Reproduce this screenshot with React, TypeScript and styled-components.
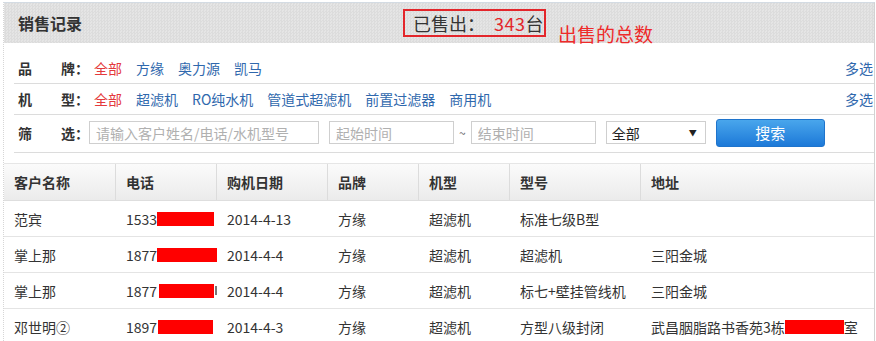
import React from 'react';
import styled, { createGlobalStyle } from 'styled-components';

const GlobalStyle = createGlobalStyle`
  html, body {
    margin: 0;
    padding: 0;
    background: #fff;
  }

  body {
    font-family: 'Noto Sans CJK SC', 'Liberation Sans', sans-serif;
    font-size: 14px;
    color: #333;
  }
`;

interface Sale {
  name: string;
  phone: string;
  redact: number;
  redactShift?: number;
  date: string;
  brand: string;
  type: string;
  model: string;
  address?: string;
  addressTail?: string;
  tailMark?: boolean;
}

const brands = ['全部', '方缘', '奥力源', '凯马'];
const types = ['全部', '超滤机', 'RO纯水机', '管道式超滤机', '前置过滤器', '商用机'];
const columns = ['客户名称', '电话', '购机日期', '品牌', '机型', '型号', '地址'];

const sales: Sale[] = [
  { name: '范宾', phone: '1533', redact: 57, date: '2014-4-13', brand: '方缘', type: '超滤机', model: '标准七级B型' },
  { name: '掌上那', phone: '1877', redact: 61, date: '2014-4-4', brand: '方缘', type: '超滤机', model: '超滤机', address: '三阳金城' },
  { name: '掌上那', phone: '1877', redact: 56, redactShift: 2, tailMark: true, date: '2014-4-4', brand: '方缘', type: '超滤机', model: '标七+壁挂管线机', address: '三阳金城' },
  { name: '邓世明②', phone: '1897', redact: 55, redactShift: 1, date: '2014-4-3', brand: '方缘', type: '超滤机', model: '方型八级封闭', address: '武昌胭脂路书香苑3栋', addressTail: '室' },
];

const App = () => {
  return (
    <>
      <GlobalStyle />
      <Panel>
        <Header>
          <Title>销售记录</Title>
          <CountBox>
            已售出：<CountNum>343</CountNum>台
          </CountBox>
          <Note>出售的总数</Note>
        </Header>

        <Filters>
          <FilterRow>
            <Label>
              <span>品</span>
              <span>牌：</span>
            </Label>
            <Options>
              {brands.map((b, i) => (
                <Option key={b} active={i === 0}>
                  {b}
                </Option>
              ))}
            </Options>
            <More>多选</More>
          </FilterRow>
          <FilterRow>
            <Label>
              <span>机</span>
              <span>型：</span>
            </Label>
            <Options>
              {types.map((t, i) => (
                <Option key={t} active={i === 0}>
                  {t}
                </Option>
              ))}
            </Options>
            <More>多选</More>
          </FilterRow>
          <FilterRow tall>
            <Label>
              <span>筛</span>
              <span>选：</span>
            </Label>
            <Controls>
              <TextInput width={230} placeholder='请输入客户姓名/电话/水机型号' />
              <DateRange>
                <TextInput width={125} placeholder='起始时间' />
                <Tilde>~</Tilde>
                <TextInput width={125} placeholder='结束时间' />
              </DateRange>
              <SelectBox>
                <NativeSelect defaultValue='all'>
                  <option value='all'>全部</option>
                </NativeSelect>
                <Arrow>▼</Arrow>
              </SelectBox>
              <SearchButton>搜索</SearchButton>
            </Controls>
          </FilterRow>
        </Filters>

        <Table>
          <HeadRow>
            {columns.map((c) => (
              <HeadCell key={c}>{c}</HeadCell>
            ))}
          </HeadRow>
          {sales.map((s, i) => (
            <BodyRow key={i}>
              <Cell>{s.name}</Cell>
              <Cell>
                {s.phone}
                <Redact style={{ width: s.redact, marginLeft: s.redactShift || 0 }} />
                {s.tailMark && <TailMark />}
              </Cell>
              <Cell>{s.date}</Cell>
              <Cell>{s.brand}</Cell>
              <Cell>{s.type}</Cell>
              <Cell>{s.model}</Cell>
              <Cell>
                {s.address}
                {s.addressTail && (
                  <>
                    <Redact style={{ width: 59 }} />
                    {s.addressTail}
                  </>
                )}
              </Cell>
            </BodyRow>
          ))}
        </Table>
      </Panel>
    </>
  );
};

export default App;

const Panel = styled.div`
  box-sizing: border-box;
  width: 872px;
  margin: 2px 0 0 3px;
  border-top: 1px solid #d3dbe3;
  border-left: 1px dotted #d6d6d6;
  border-right: 1px solid #d2d2d2;
  background: #fff;
`;

const Header = styled.div`
  position: relative;
  display: flex;
  align-items: center;

  height: 40px;
  padding-left: 14px;

  background-color: #e5e5e5;
  background-image: repeating-conic-gradient(#dcdcdc 0 25%, transparent 0 50%);
  background-size: 3px 3px;
`;

const Title = styled.div`
  font-size: 16px;
  font-weight: bold;
  line-height: 20px;
  color: #333;
`;

const CountBox = styled.div`
  box-sizing: border-box;
  display: flex;
  align-items: center;

  width: 143px;
  height: 28px;
  margin-left: 321px;
  padding: 0 0 0 8px;

  border: 2px solid #e3262b;
  font-size: 18px;
  line-height: 20px;
  color: #333;
  white-space: nowrap;
`;

const CountNum = styled.span`
  margin-left: 9px;
  color: #e3262b;
  letter-spacing: 0.5px;
`;

const Note = styled.div`
  position: absolute;
  left: 554px;
  top: 21px;

  font-size: 19px;
  line-height: 20px;
  color: #ee2a2a;
  white-space: nowrap;
`;

const Filters = styled.div`
  padding: 10px 0 0 10px;
`;

const FilterRow = styled.div<{ tall?: boolean }>`
  display: flex;
  align-items: center;

  height: ${(props) => (props.tall ? '35px' : '30px')};
  padding: ${(props) => (props.tall ? '0 0 2px 4px' : '0 0 0 4px')};
  box-sizing: content-box;

  border-bottom: 1px solid #dcdcdc;
`;

const Label = styled.div`
  display: flex;
  justify-content: space-between;

  width: 71px;

  font-weight: bold;
  font-size: 14px;
  color: #333;
`;

const Options = styled.div`
  display: flex;
  gap: 14px;

  margin-left: 5px;
  flex-grow: 1;
`;

const Option = styled.a<{ active?: boolean }>`
  color: ${(props) => (props.active ? '#e4393c' : '#2f68ad')};
  cursor: pointer;
  white-space: nowrap;
`;

const More = styled.a`
  margin-right: 1px;
  color: #2f68ad;
  cursor: pointer;
`;

const Controls = styled.div`
  display: flex;
  align-items: center;
  gap: 10px;
`;

const TextInput = styled.input<{ width: number }>`
  box-sizing: border-box;
  width: ${(props) => props.width}px;
  height: 23px;
  padding: 0 6px;

  border: 1px solid #cfcfcf;
  outline: none;
  font-family: inherit;
  font-size: 14px;
  color: #333;

  &::placeholder {
    color: #b0b0b0;
  }
`;

const DateRange = styled.div`
  display: flex;
  align-items: center;
  gap: 5px;
`;

const Tilde = styled.span`
  color: #666;
  font-size: 12px;
`;

const SelectBox = styled.div`
  box-sizing: border-box;
  display: flex;
  align-items: center;

  width: 100px;
  height: 23px;
  padding: 0 8px 0 5px;

  border: 1px solid #cfcfcf;
  background: #fff;
`;

const NativeSelect = styled.select`
  flex-grow: 1;
  appearance: none;

  padding: 0;
  border: 0;
  outline: none;
  background: transparent;
  font-family: inherit;
  font-size: 14px;
  color: #222;
`;

const Arrow = styled.span`
  font-size: 8px;
  color: #222;
`;

const SearchButton = styled.button`
  box-sizing: border-box;
  width: 109px;
  height: 28px;

  border: 1px solid #1f74cc;
  border-radius: 3px;
  background: linear-gradient(#49a6ec, #1d79d8);
  font-family: inherit;
  font-size: 15px;
  color: #fff;
  cursor: pointer;
`;

const Table = styled.div`
  margin-top: 10px;
`;

const gridColumns = '112px 101px 111px 91px 91px 131px 1fr';

const HeadRow = styled.div`
  display: grid;
  grid-template-columns: ${gridColumns};

  height: 36px;

  border-top: 1px solid #e6e6e6;
  border-bottom: 1px solid #dedede;
  background: linear-gradient(#fbfbfb, #ebebeb);
`;

const HeadCell = styled.div`
  display: flex;
  align-items: center;

  padding-left: 10px;

  border-right: 1px solid #dcdcdc;
  font-weight: bold;
  font-size: 14px;
  color: #333;

  &:last-child {
    border-right: 0;
  }
`;

const BodyRow = styled.div`
  display: grid;
  grid-template-columns: ${gridColumns};

  height: 35px;

  border-bottom: 1px solid #e4e4e4;
`;

const Cell = styled.div`
  display: flex;
  align-items: center;

  padding-left: 10px;

  font-size: 14px;
  color: #333;
  white-space: nowrap;
`;

const Redact = styled.span`
  display: inline-block;
  height: 14px;
  background: #ff0000;
`;

const TailMark = styled.span`
  display: inline-block;
  width: 2px;
  height: 9px;
  margin-left: 1px;
  background: #777;
`;
